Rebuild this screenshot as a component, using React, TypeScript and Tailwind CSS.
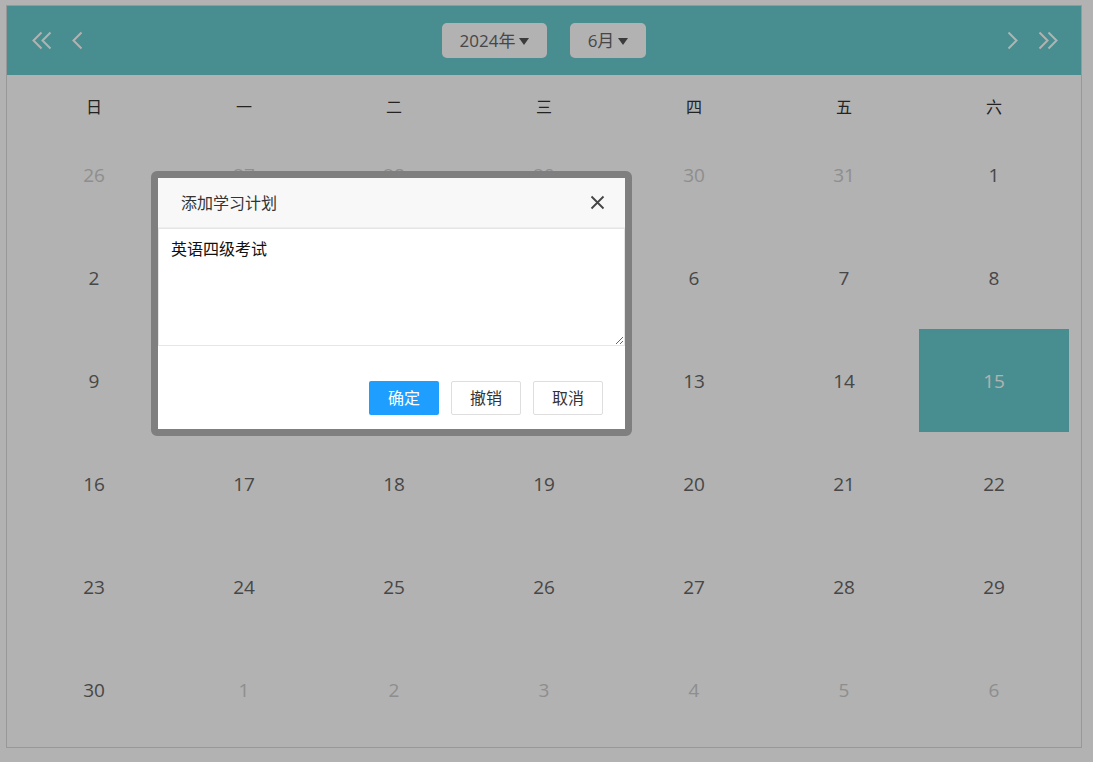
import React from 'react';

const font = { fontFamily: '"Open Sans", "Noto Sans CJK SC", sans-serif' };

const weeks = ['日', '一', '二', '三', '四', '五', '六'];

type Day = { n: number; other?: boolean };

function buildDays(): Day[] {
  const days: Day[] = [];
  [26, 27, 28, 29, 30, 31].forEach((n) => days.push({ n, other: true }));
  for (let i = 1; i <= 30; i++) days.push({ n: i });
  for (let i = 1; i <= 6; i++) days.push({ n: i, other: true });
  return days;
}

function Chevron({ double, dir }: { double?: boolean; dir: 'l' | 'r' }) {
  const pts = dir === 'l' ? '9,1 1,9 9,17' : '1,1 9,9 1,17';
  return (
    <svg width={double ? 20 : 11} height="19" viewBox={double ? '0 0 20 19' : '0 0 11 19'} fill="none">
      <polyline points={pts} stroke="white" strokeWidth="2" transform="translate(0.5 0.5)" />
      {double && <polyline points={pts} stroke="white" strokeWidth="2" transform="translate(9.5 0.5)" />}
    </svg>
  );
}

function Select({ label, width }: { label: string; width: string }) {
  return (
    <div className={`${width} h-[35px] rounded-[5px] bg-white flex items-center justify-center gap-[4px] text-[17px] text-[#666]`}>
      <span>{label}</span>
      <span className="w-0 h-0 border-l-[5px] border-r-[5px] border-t-[7px] border-l-transparent border-r-transparent border-t-[#555] mt-[2px]" />
    </div>
  );
}

export default function App() {
  const days = buildDays();
  return (
    <div className="relative w-[1093px] h-[762px] bg-white overflow-hidden" style={font}>
      <div className="ml-[6px] mt-[5px] w-[1076px] border border-[#dadada] pb-[6px]">
        <div className="h-[69px] bg-[#67ccce] flex items-center pl-[25px] pr-[23px]">
          <div className="flex items-center gap-[20px]">
            <Chevron double dir="l" />
            <Chevron dir="l" />
          </div>
          <div className="flex-1 flex items-center justify-center gap-[23px] pr-[2px]">
            <Select label="2024年" width="w-[105px]" />
            <Select label="6月" width="w-[76px]" />
          </div>
          <div className="flex items-center gap-[20px]">
            <Chevron dir="r" />
            <Chevron double dir="r" />
          </div>
        </div>
        <div className="px-[12px]">
          <div className="grid grid-cols-7 h-[48px]">
            {weeks.map((w) => (
              <div key={w} className="flex justify-center pt-[21px] text-[16px] leading-[22px] text-[#333]">
                {w}
              </div>
            ))}
          </div>
          <div className="grid grid-cols-7">
            {days.map((d, i) => {
              const hi = !d.other && d.n === 15;
              return (
                <div
                  key={i}
                  className={`h-[103px] flex items-center justify-center pt-[2px] text-[19px] ${
                    hi ? 'bg-[#67ccce] text-white' : d.other ? 'text-[#cccccc]' : 'text-[#666]'
                  }`}
                >
                  {d.n}
                </div>
              );
            })}
          </div>
        </div>
      </div>

      <div className="fixed inset-0 bg-black/30" />

      <div className="absolute left-[151px] top-[171px] w-[481px] border-[7px] border-[#7f7f7f] rounded-[6px] bg-white">
        <div className="h-[50px] bg-[#f8f8f8] border-b border-[#eee] flex items-center justify-between pl-[23px] pr-[20px]">
          <span className="text-[16px] text-[#333]">添加学习计划</span>
          <svg width="15" height="15" viewBox="0 0 15 15">
            <path d="M1.5 1.5 L13.5 13.5 M13.5 1.5 L1.5 13.5" stroke="#444" strokeWidth="1.8" />
          </svg>
        </div>
        <textarea
          className="block w-full h-[118px] border border-[#e6e6e6] px-[12px] pt-[9px] text-[16px] leading-[22px] text-[#111] outline-none"
          style={font}
          defaultValue="英语四级考试"
        />
        <div className="flex justify-end gap-[12px] pt-[35px] pb-[14px] pr-[22px]">
          <button className="w-[70px] h-[34px] rounded-[2px] bg-[#1e9fff] text-white text-[16px]">确定</button>
          <button className="w-[70px] h-[34px] rounded-[2px] border border-[#dedede] bg-white text-[#333] text-[16px]">撤销</button>
          <button className="w-[70px] h-[34px] rounded-[2px] border border-[#dedede] bg-white text-[#333] text-[16px]">取消</button>
        </div>
      </div>
    </div>
  );
}
